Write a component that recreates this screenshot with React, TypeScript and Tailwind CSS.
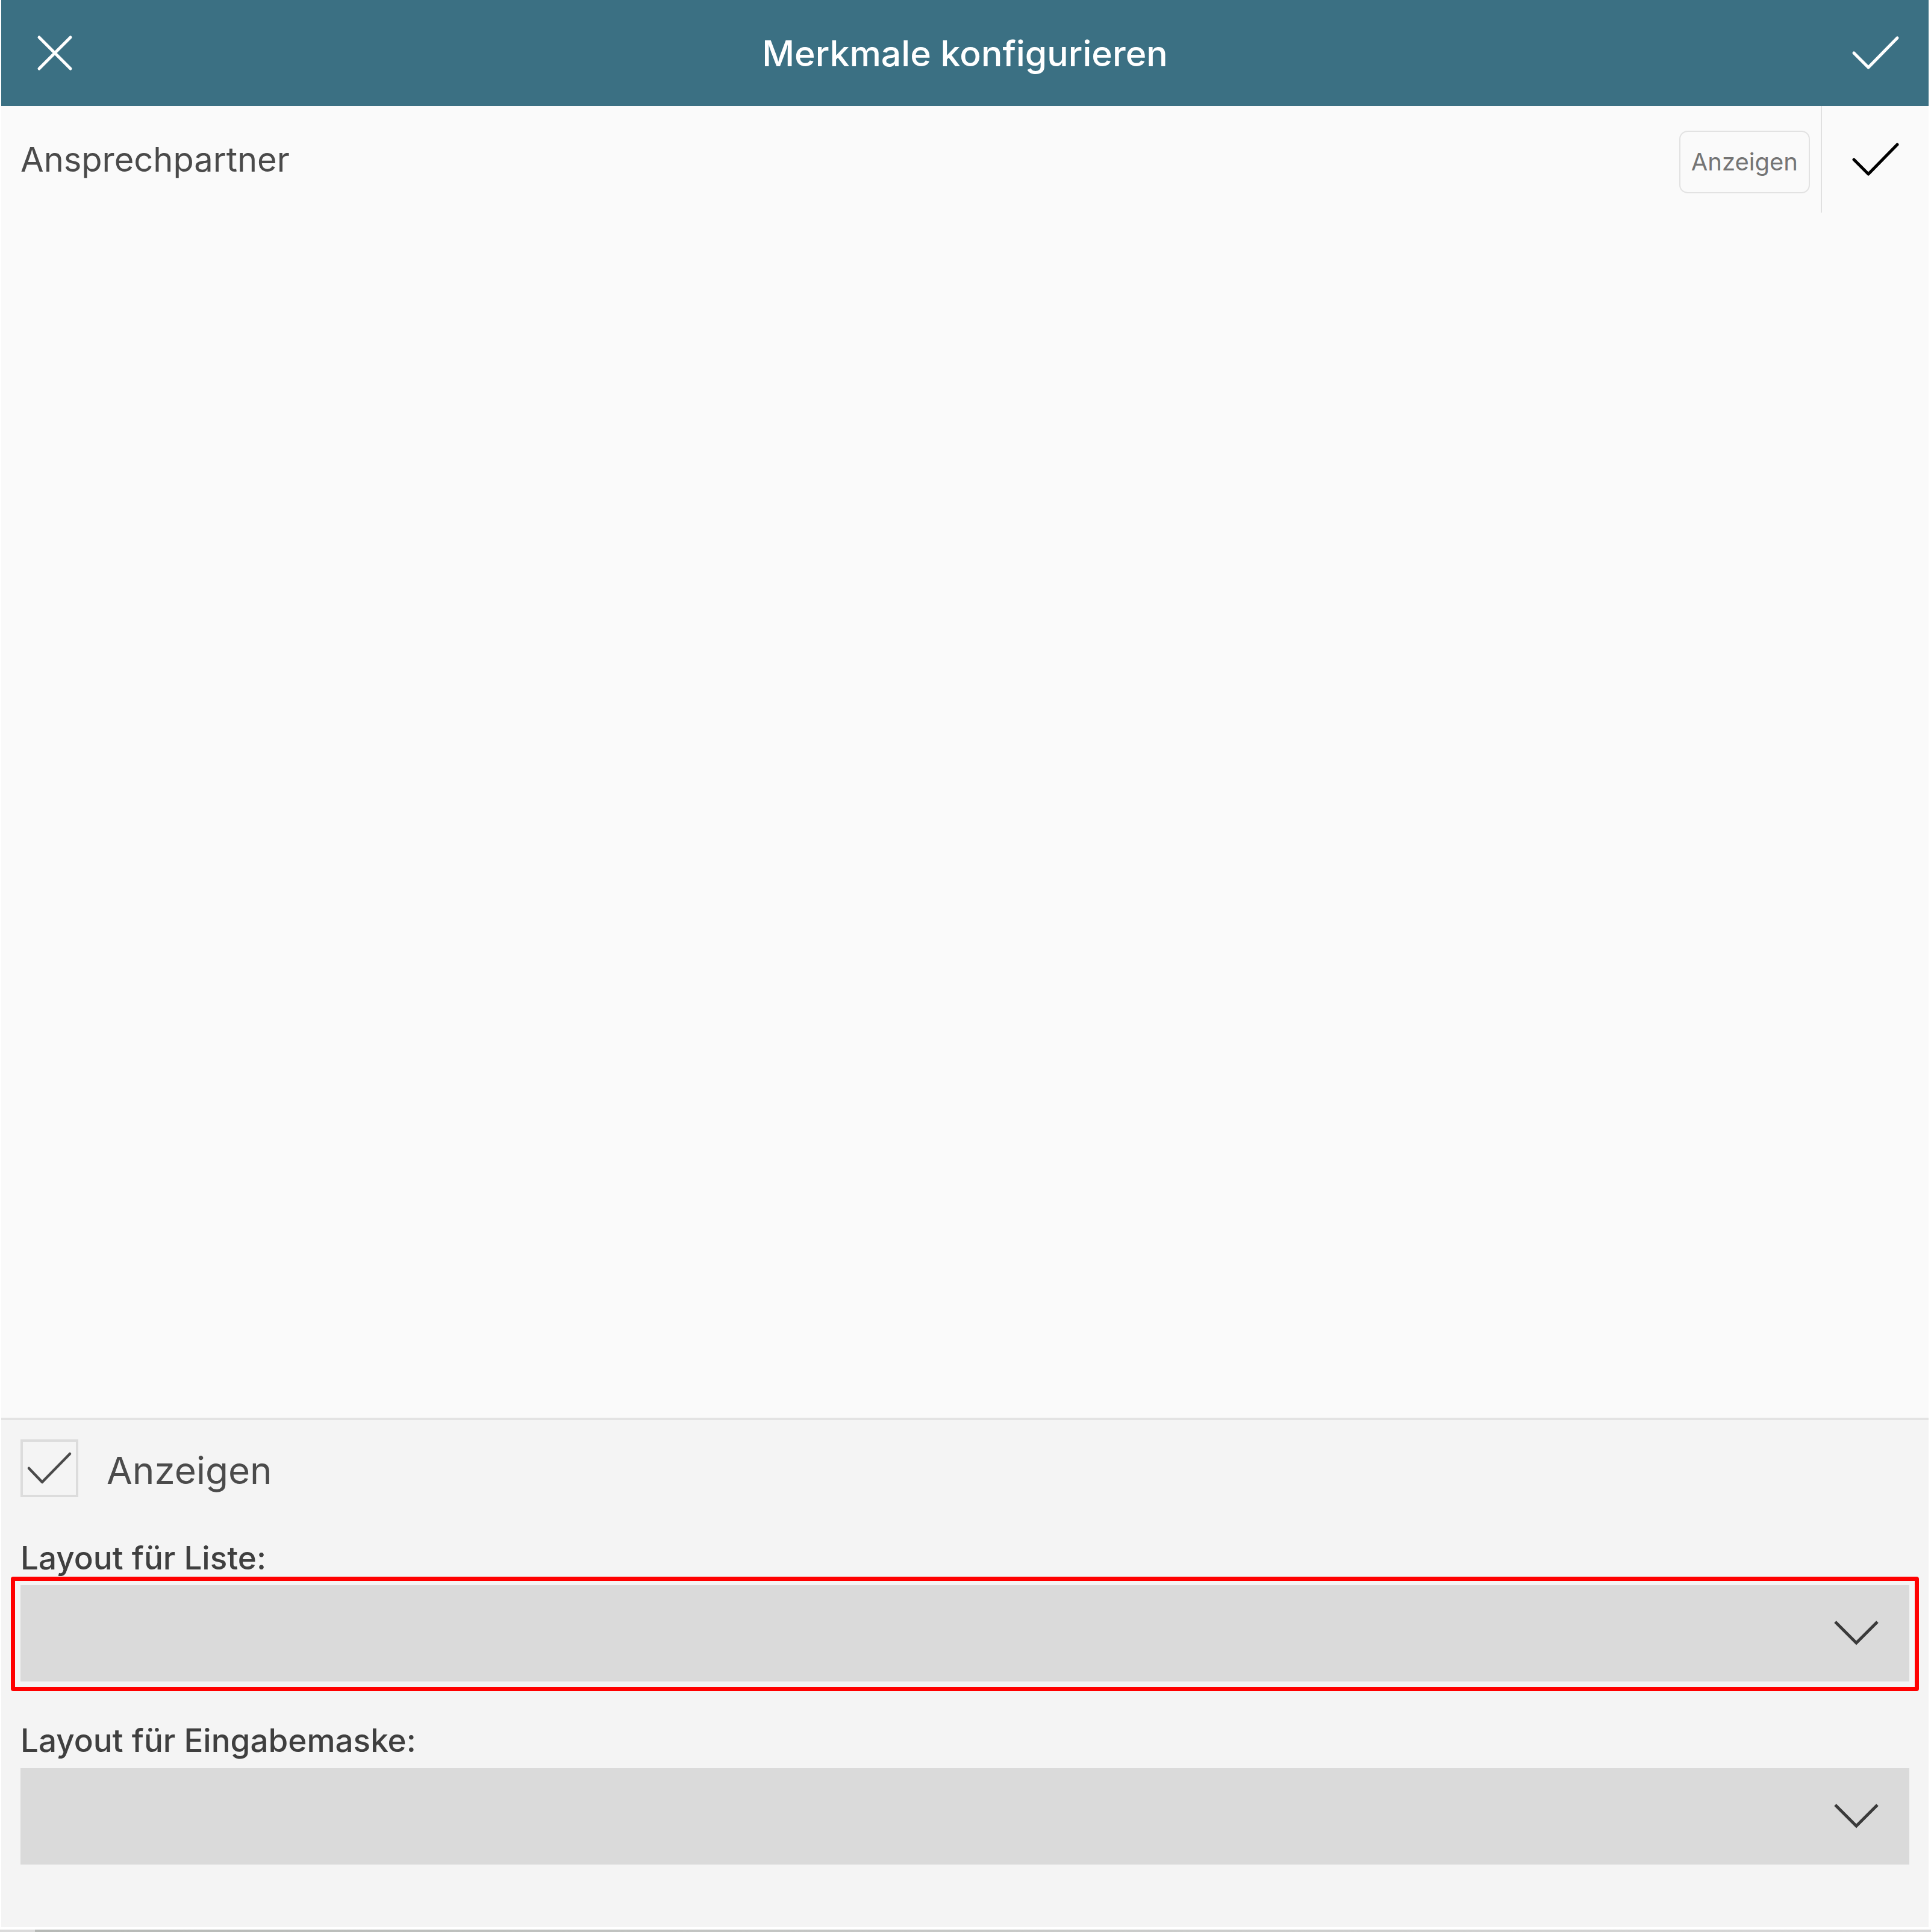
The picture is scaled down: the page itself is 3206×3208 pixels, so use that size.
import React from "react";

const font = { fontFamily: "Inter, Roboto, 'Liberation Sans', sans-serif" };

function Chevron() {
  return (
    <svg width="76" height="44" viewBox="0 0 76 44" fill="none">
      <path d="M3 3 L38 38 L73 3" stroke="#3a3a3a" strokeWidth="5" strokeLinecap="butt" strokeLinejoin="miter" />
    </svg>
  );
}

export default function App() {
  return (
    <div className="w-[3206px] h-[3208px] bg-white flex flex-col" style={font}>
      <div className="ml-[2px] w-[3200px] h-[3200px] flex flex-col">
        {/* Header */}
        <div className="h-[176px] bg-[#3b7083] grid grid-cols-[1fr_auto_1fr] items-center">
          <div className="pl-[59px] flex items-center">
            <svg width="60" height="60" viewBox="0 0 60 60" fill="none">
              <path d="M4 4 L56 56 M56 4 L4 56" stroke="#ffffff" strokeWidth="5" strokeLinecap="round" />
            </svg>
          </div>
          <div className="text-white text-[59px] font-medium leading-none">Merkmale konfigurieren</div>
          <div className="flex justify-end pr-[48px]">
            <svg width="80" height="58" viewBox="0 0 80 58" fill="none">
              <path d="M4 29 L28 53 L76 4" stroke="#ffffff" strokeWidth="5" strokeLinecap="round" strokeLinejoin="round" />
            </svg>
          </div>
        </div>

        {/* Row */}
        <div className="h-[177px] bg-[#fafafa] flex items-center">
          <div className="flex-1 pl-[32px] text-[56px] text-[#4a4a4a] leading-none">Ansprechpartner</div>
          <div className="h-[104px] px-[18px] border-2 border-[#e2e2e2] rounded-[14px] flex items-center text-[40px] text-[#747474] mt-[9px]">
            Anzeigen
          </div>
          <div className="ml-[18px] w-[2px] self-stretch bg-[#e0e0e0]" />
          <div className="w-[177px] flex items-center justify-center">
            <svg width="80" height="58" viewBox="0 0 80 58" fill="none">
              <path d="M4 29 L28 53 L76 4" stroke="#000000" strokeWidth="5" strokeLinecap="round" strokeLinejoin="round" />
            </svg>
          </div>
        </div>

        {/* Empty area */}
        <div className="flex-1 bg-[#fafafa]" />
        <div className="h-[4px] bg-[#e3e3e3]" />

        {/* Bottom section */}
        <div className="bg-[#f4f4f4] px-[32px] pt-[32px] pb-[104px] flex flex-col">
          <div className="flex items-center h-[96px]">
            <div className="w-[96px] h-[96px] border-[4px] border-[#dcdcdc] flex items-center justify-center">
              <svg width="76" height="56" viewBox="0 0 76 56" fill="none">
                <path d="M4 28 L26 51 L72 4" stroke="#4a4a4a" strokeWidth="4.5" strokeLinecap="round" strokeLinejoin="round" />
              </svg>
            </div>
            <div className="ml-[47px] text-[62px] text-[#4b4b4b] leading-none mt-[8px]">Anzeigen</div>
          </div>

          <div className="mt-[68px] text-[53px] leading-[66px] font-medium text-[#3f3f3f]">Layout für Liste:</div>
          <div className="relative mt-[12px] h-[160px] bg-[#dadada] flex items-center justify-end pr-[50px]">
            <Chevron />
            <div className="absolute -left-[16px] -right-[16px] -top-[14px] -bottom-[16px] border-[7px] border-[#ff0000] rounded-[4px]" />
          </div>

          <div className="mt-[65px] text-[53px] leading-[66px] font-medium text-[#3f3f3f]">Layout für Eingabemaske:</div>
          <div className="mt-[13px] h-[160px] bg-[#dadada] flex items-center justify-end pr-[50px]">
            <Chevron />
          </div>
        </div>
      </div>
      <div className="mt-[4px] h-[4px] flex">
        <div className="w-[58px] bg-[#dadada]" />
        <div className="flex-1 bg-gradient-to-r from-[#b6b9b6] to-[#d8d8d8]" />
      </div>
    </div>
  );
}
